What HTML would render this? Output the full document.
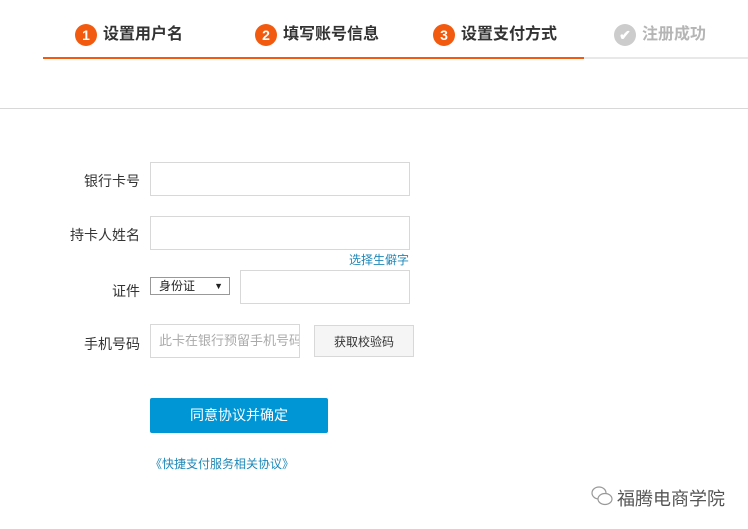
<!DOCTYPE html>
<html><head><meta charset="utf-8">
<style>
body{margin:0;width:748px;height:529px;background:#fff;position:relative;font-family:"Liberation Sans","Noto Sans CJK SC",sans-serif;overflow:hidden}
.a{position:absolute}
.step{position:absolute;top:24px;height:22px;line-height:22px;font-size:16px;font-weight:bold;color:#333;white-space:nowrap}
.step i{display:inline-block;width:22px;height:22px;border-radius:50%;background:#f25a0f;color:#fff;font-style:normal;text-align:center;font-size:14px;line-height:22px;vertical-align:top;margin-right:6px}
.lbl{position:absolute;width:100px;left:40px;text-align:right;font-size:14px;color:#333}
.inp{position:absolute;border:1px solid #d8d8d8;background:#fff;box-sizing:border-box}
</style></head><body>
<div class="step" style="left:75px"><i>1</i>设置用户名</div>
<div class="step" style="left:255px"><i>2</i>填写账号信息</div>
<div class="step" style="left:433px"><i>3</i>设置支付方式</div>
<div class="step" style="left:614px;color:#b5b5b5"><i style="background:#ccc">✔</i>注册成功</div>
<div class="a" style="left:43px;top:57px;width:541px;height:2px;background:#f25a0f"></div>
<div class="a" style="left:584px;top:57px;width:164px;height:2px;background:#e8e8e8"></div>
<div class="a" style="left:0;top:108px;width:748px;height:1px;background:#d8d8d8"></div>

<div class="lbl" style="top:171px">银行卡号</div>
<div class="inp" style="left:150px;top:162px;width:260px;height:34px"></div>
<div class="lbl" style="top:225px">持卡人姓名</div>
<div class="inp" style="left:150px;top:216px;width:260px;height:34px"></div>
<div class="a" style="left:340px;top:251px;width:69px;text-align:right;font-size:12px;color:#1e88b8">选择生僻字</div>
<div class="lbl" style="top:281px">证件</div>
<div class="a" style="left:150px;top:277px;width:80px;height:18px;border:1px solid #999;box-sizing:border-box;font-size:12px;line-height:16px;padding-left:8px;color:#222">身份证<span style="position:absolute;right:6px;font-size:9px">▼</span></div>
<div class="inp" style="left:240px;top:270px;width:170px;height:34px"></div>
<div class="lbl" style="top:334px">手机号码</div>
<div class="inp" style="left:150px;top:324px;width:150px;height:34px;font-size:13px;color:#aaa;line-height:32px;padding-left:8px;white-space:nowrap;overflow:hidden">此卡在银行预留手机号码</div>
<div class="inp" style="left:314px;top:325px;width:100px;height:32px;background:#f5f5f5;font-size:12px;color:#333;line-height:32px;text-align:center">获取校验码</div>
<div class="a" style="left:150px;top:398px;width:178px;height:35px;background:#0096d6;border-radius:2px;color:#fff;font-size:14px;line-height:35px;text-align:center">同意协议并确定</div>
<div class="a" style="left:150px;top:455px;font-size:12px;color:#1e88b8">《快捷支付服务相关协议》</div>
<svg class="a" style="left:590px;top:484px" width="24" height="24" viewBox="0 0 24 24" fill="none" stroke="#999" stroke-width="1.2"><ellipse cx="9" cy="9" rx="7" ry="6"/><ellipse cx="15" cy="15" rx="7" ry="5.5" fill="#fff"/></svg>
<div class="a" style="left:617px;top:485px;font-size:18px;color:#555;white-space:nowrap">福腾电商学院</div>
</body></html>
